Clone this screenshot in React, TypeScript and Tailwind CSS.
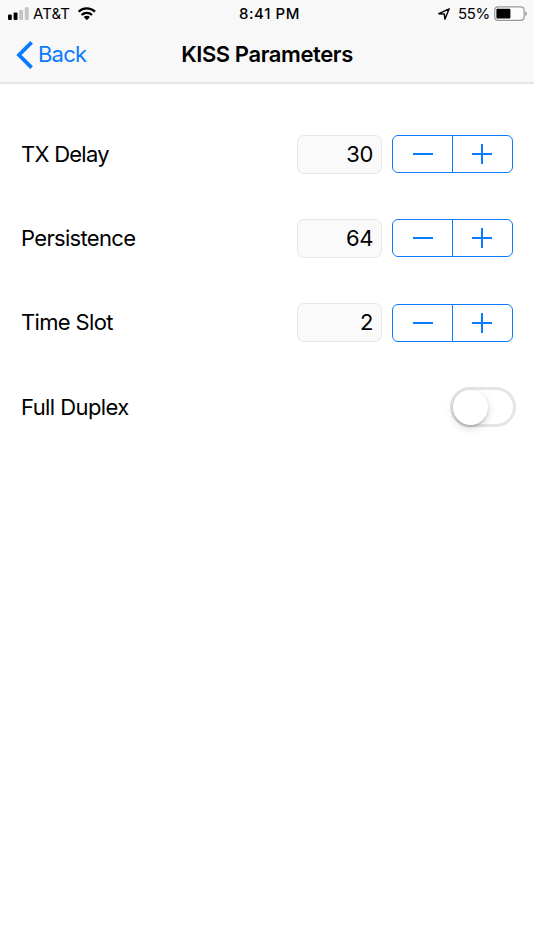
import type { ReactNode } from "react";

function StatusBar() {
  return (
    <div className="grid h-[26px] grid-cols-3 items-center pt-px text-[15px] leading-[26px]">
      <div className="flex items-center pl-2">
        <svg width="21" height="14" viewBox="0 0 21 14">
          <rect x="0" y="7.6" width="3.8" height="5.4" rx="1" />
          <rect x="5.6" y="5.6" width="3.9" height="7.4" rx="1" />
          <rect x="11.2" y="3" width="3.9" height="10" rx="1" fill="#c4c4c4" />
          <rect x="16.8" y="0.2" width="3.9" height="12.8" rx="1" fill="#c4c4c4" />
        </svg>
        <span className="ml-[4px] w-[38px] whitespace-nowrap tracking-[0.1px]">AT&amp;T</span>
        <svg className="ml-[7px]" width="18" height="14" viewBox="0 0 18 14" fill="none" stroke="#000" strokeWidth="2.3">
          <path d="M.6 4.7a11.9 11.9 0 0 1 16.4 0" />
          <path d="M3.6 8a7.4 7.4 0 0 1 10.4 0" />
          <path d="M8.8 13.2 5.7 10.1a4.4 4.4 0 0 1 6.2 0Z" fill="#000" stroke="none" />
        </svg>
      </div>
      <div className="pl-[5px] text-center font-[550] tracking-[0.6px]">8:41 PM</div>
      <div className="flex items-center justify-end pr-[6px]">
        <svg width="12" height="12" viewBox="0 0 12 12" fill="none" stroke="#000" strokeWidth="1.4" strokeLinejoin="round">
          <path d="M.8 5.7 11.2.8 6.9 11.2 6.3 6Z" />
        </svg>
        <span className="ml-[8px] w-[32px] whitespace-nowrap tracking-[-0.4px]">55%</span>
        <svg className="ml-[4px]" width="34" height="16" viewBox="0 0 34 16">
          <rect x="0.7" y="0.8" width="29.4" height="13.6" rx="3.4" fill="#fcfcfc" stroke="#999" strokeWidth="1.2" />
          <rect x="2.4" y="2.7" width="14" height="9.8" rx="1" />
          <path d="M31.3 5.2c2.2.8 2.2 4 0 4.8Z" fill="#999" />
        </svg>
      </div>
    </div>
  );
}

function Row({ label, children }: { label: ReactNode; children: ReactNode }) {
  return (
    <div className="flex h-[84.3px] items-center justify-between pl-[21px] pr-[21px]">
      {label}
      {children}
    </div>
  );
}

function Stepper({ value }: { value: number }) {
  return (
    <div className="flex items-center gap-[10px]">
      <div className="flex h-[39px] w-[85px] items-center justify-end rounded-[7px] border border-[#e6e6e6] bg-[#fafafa] pr-[8px] text-[22px] tracking-[-0.4px]">
        {value}
      </div>
      <div className="flex h-[38px] w-[121px] rounded-[6px] border-[1.3px] border-[#0a7aff] text-[#0a7aff]">
        <button aria-label="Decrease" className="flex w-[60px] items-center justify-center border-r border-[#0a7aff]">
          <svg width="20" height="20" viewBox="0 0 20 20" stroke="currentColor" strokeWidth="2">
            <path d="M0 10h20" />
          </svg>
        </button>
        <button aria-label="Increase" className="flex flex-1 items-center justify-center pr-px">
          <svg width="20" height="20" viewBox="0 0 20 20" stroke="currentColor" strokeWidth="2">
            <path d="M0 10h20M10 0v20" />
          </svg>
        </button>
      </div>
    </div>
  );
}

export default function App() {
  return (
    <div className="h-[950px] w-full overflow-hidden bg-white font-['Inter','Liberation_Sans',sans-serif] text-black">
      <header className="h-[84px] border-b-2 border-[#e7e7e7] bg-[#f8f8f8]">
        <StatusBar />
        <nav className="grid h-[57px] grid-cols-[150px_1fr_150px] items-center">
          <button className="flex items-center pl-[16px] text-[22px] tracking-[-0.8px] text-[#0a7aff]">
            <svg width="18" height="28" viewBox="0 0 18 28" fill="none" stroke="currentColor" strokeWidth="3.8">
              <path d="M15.6 1.4 3 14l12.6 12.6" />
            </svg>
            <span className="ml-[4px]">Back</span>
          </button>
          <h1 className="whitespace-nowrap text-center text-[22px] font-semibold tracking-[-0.4px]">KISS Parameters</h1>
        </nav>
      </header>
      <main className="pt-[28px] text-[22px]">
        <Row label={<span className="tracking-[-0.75px]">TX Delay</span>}>
          <Stepper value={30} />
        </Row>
        <Row label={<span className="tracking-[-0.68px]">Persistence</span>}>
          <Stepper value={64} />
        </Row>
        <Row label={<span className="tracking-[-0.65px]">Time Slot</span>}>
          <Stepper value={2} />
        </Row>
        <Row label={<span className="tracking-[-0.58px]">Full Duplex</span>}>
          <button
            role="switch"
            aria-checked="false"
            aria-label="Full Duplex"
            className="-mr-[3px] flex h-[40px] w-[66px] items-center rounded-full border-[3px] border-[#e5e5e5]"
          >
            <span className="-ml-[0.5px] size-[35px] shrink-0 rounded-full bg-white shadow-[0_3px_8px_rgba(0,0,0,0.16),0_2px_2px_rgba(0,0,0,0.14)]" />
          </button>
        </Row>
      </main>
    </div>
  );
}
